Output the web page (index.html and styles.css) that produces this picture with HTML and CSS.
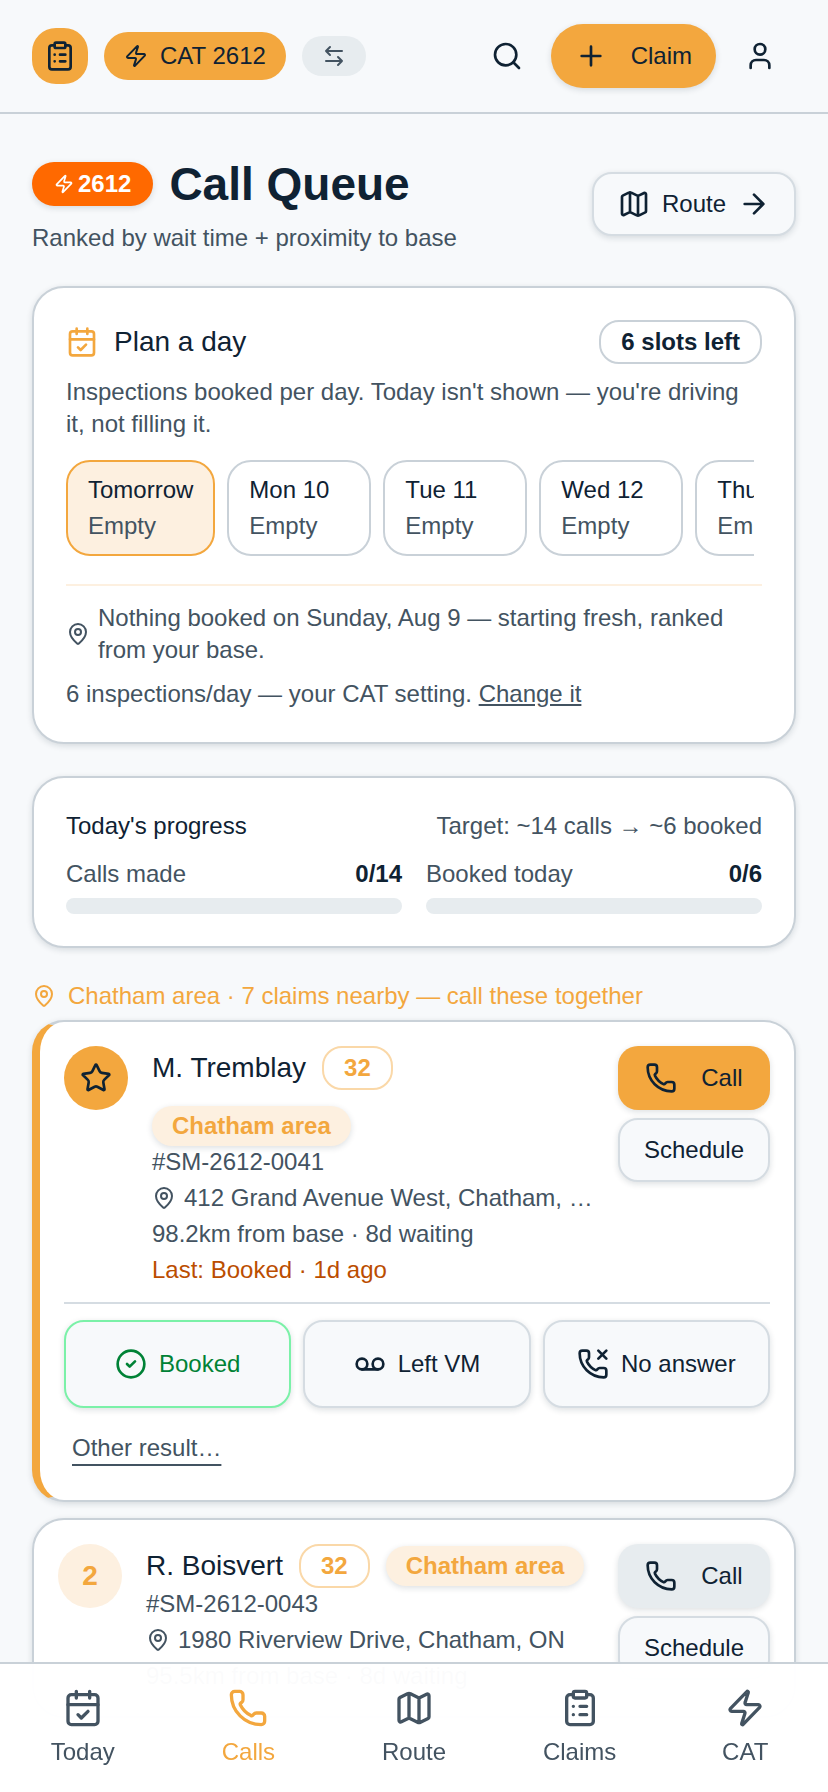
FILE: index.html
```html
<!DOCTYPE html>
<html lang="en">
<head>
    <meta charset="UTF-8">
    <meta name="viewport" content="width=device-width, initial-scale=1.0">
    <title>Call Queue</title>
    <link rel="stylesheet" href="styles.css">
</head>
<body>
    <svg class="sprite" aria-hidden="true">
        <symbol id="clipboard" viewBox="0 0 24 24"><rect x="8" y="2" width="8" height="4" rx="1"/><path d="M16 4h2a2 2 0 0 1 2 2v14a2 2 0 0 1-2 2H6a2 2 0 0 1-2-2V6a2 2 0 0 1 2-2h2M12 11h4M12 16h4M8 11h.01M8 16h.01"/></symbol>
        <symbol id="zap" viewBox="0 0 24 24"><path d="M4 14a1 1 0 0 1-.78-1.63l9.9-10.2a.5.5 0 0 1 .86.46l-1.92 6.02A1 1 0 0 0 13 10h7a1 1 0 0 1 .78 1.63l-9.9 10.2a.5.5 0 0 1-.86-.46l1.92-6.02A1 1 0 0 0 11 14z"/></symbol>
        <symbol id="swap" viewBox="0 0 24 24"><path d="M8 3 4 7l4 4M4 7h16M16 21l4-4-4-4M20 17H4"/></symbol>
        <symbol id="search" viewBox="0 0 24 24"><circle cx="11" cy="11" r="8"/><path d="m21 21-4.3-4.3"/></symbol>
        <symbol id="plus" viewBox="0 0 24 24"><path d="M5 12h14M12 5v14"/></symbol>
        <symbol id="user" viewBox="0 0 24 24"><path d="M19 21v-2a4 4 0 0 0-4-4H9a4 4 0 0 0-4 4v2"/><circle cx="12" cy="7" r="4"/></symbol>
        <symbol id="map" viewBox="0 0 24 24"><path d="M14.106 5.553a2 2 0 0 0 1.788 0l3.659-1.83A1 1 0 0 1 21 4.619v12.764a1 1 0 0 1-.553.894l-4.553 2.277a2 2 0 0 1-1.788 0l-4.212-2.106a2 2 0 0 0-1.788 0l-3.659 1.83A1 1 0 0 1 3 19.381V6.618a1 1 0 0 1 .553-.894l4.553-2.277a2 2 0 0 1 1.788 0zM15 5.764v15M9 3.236v15"/></symbol>
        <symbol id="arrow" viewBox="0 0 24 24"><path d="M5 12h14M12 5l7 7-7 7"/></symbol>
        <symbol id="calendar" viewBox="0 0 24 24"><path d="M8 2v4M16 2v4"/><rect x="3" y="4" width="18" height="18" rx="2"/><path d="M3 10h18M9 16l2 2 4-4"/></symbol>
        <symbol id="pin" viewBox="0 0 24 24"><path d="M20 10c0 4.993-5.539 10.193-7.399 11.799a1 1 0 0 1-1.202 0C9.539 20.193 4 14.993 4 10a8 8 0 0 1 16 0"/><circle cx="12" cy="10" r="3"/></symbol>
        <symbol id="star" viewBox="0 0 24 24"><path d="M11.525 2.295a.53.53 0 0 1 .95 0l2.31 4.679a2.123 2.123 0 0 0 1.595 1.16l5.166.756a.53.53 0 0 1 .294.904l-3.736 3.638a2.123 2.123 0 0 0-.611 1.878l.882 5.14a.53.53 0 0 1-.771.56l-4.618-2.428a2.122 2.122 0 0 0-1.973 0L6.396 21.01a.53.53 0 0 1-.77-.56l.881-5.139a2.122 2.122 0 0 0-.611-1.879L2.16 9.795a.53.53 0 0 1 .294-.906l5.165-.755a2.122 2.122 0 0 0 1.597-1.16z"/></symbol>
        <symbol id="phone" viewBox="0 0 24 24"><path d="M13.832 16.568a1 1 0 0 0 1.213-.303l.355-.465A2 2 0 0 1 17 15h3a2 2 0 0 1 2 2v3a2 2 0 0 1-2 2A18 18 0 0 1 2 4a2 2 0 0 1 2-2h3a2 2 0 0 1 2 2v3a2 2 0 0 1-.8 1.6l-.468.351a1 1 0 0 0-.292 1.233 14 14 0 0 0 6.392 6.384"/></symbol>
        <symbol id="phone-missed" viewBox="0 0 24 24"><path d="m16 2 6 6M22 2l-6 6"/><use href="#phone" width="24" height="24"/></symbol>
        <symbol id="check" viewBox="0 0 24 24"><circle cx="12" cy="12" r="10"/><path d="m9 12 2 2 4-4"/></symbol>
        <symbol id="voicemail" viewBox="0 0 24 24"><circle cx="6" cy="12" r="4"/><circle cx="18" cy="12" r="4"/><path d="M6 16h12"/></symbol>
    </svg>

    <header class="topbar">
        <a class="logo" href="#" aria-label="Home"><svg class="icon"><use href="#clipboard"/></svg></a>
        <button class="cat-pill"><svg class="icon icon-sm"><use href="#zap"/></svg>CAT 2612</button>
        <button class="swap-pill" aria-label="Switch"><svg class="icon icon-sm"><use href="#swap"/></svg></button>
        <div class="topbar-actions">
            <button class="icon-btn" aria-label="Search"><svg class="icon"><use href="#search"/></svg></button>
            <button class="claim-btn"><svg class="icon"><use href="#plus"/></svg>Claim</button>
            <button class="icon-btn" aria-label="Account"><svg class="icon"><use href="#user"/></svg></button>
        </div>
    </header>

    <main class="content">
        <div class="page-head">
            <div>
                <div class="page-title">
                    <span class="cat-tag"><svg class="icon icon-xs"><use href="#zap"/></svg>2612</span>
                    <h1>Call Queue</h1>
                </div>
                <p class="subtitle">Ranked by wait time + proximity to base</p>
            </div>
            <a class="btn route-btn" href="#"><svg class="icon"><use href="#map"/></svg>Route<svg class="icon"><use href="#arrow"/></svg></a>
        </div>

        <section class="card">
            <div class="plan-head">
                <svg class="icon amber"><use href="#calendar"/></svg>
                <h2>Plan a day</h2>
                <span class="badge">6 slots left</span>
            </div>
            <p class="plan-text">Inspections booked per day. Today isn't shown — you're driving it, not filling it.</p>
            <div class="days">
                <button class="day selected">Tomorrow<span>Empty</span></button>
                <button class="day">Mon 10<span>Empty</span></button>
                <button class="day">Tue 11<span>Empty</span></button>
                <button class="day">Wed 12<span>Empty</span></button>
                <button class="day">Thu 13<span>Empty</span></button>
            </div>
            <div class="plan-foot">
                <p class="with-icon"><svg class="icon icon-sm"><use href="#pin"/></svg><span>Nothing booked on Sunday, Aug 9 — starting fresh, ranked from your base.</span></p>
                <p>6 inspections/day — your CAT setting. <a href="#">Change it</a></p>
            </div>
        </section>

        <section class="card progress-card">
            <div class="split">
                <h3>Today's progress</h3>
                <span>Target: ~14 calls → ~6 booked</span>
            </div>
            <div class="meters">
                <div class="meter">
                    <div class="split"><label for="calls">Calls made</label><b>0/14</b></div>
                    <progress id="calls" value="0" max="14"></progress>
                </div>
                <div class="meter">
                    <div class="split"><label for="booked">Booked today</label><b>0/6</b></div>
                    <progress id="booked" value="0" max="6"></progress>
                </div>
            </div>
        </section>

        <section class="queue">
            <p class="area-label"><svg class="icon icon-sm"><use href="#pin"/></svg>Chatham area · 7 claims nearby — call these together</p>

            <article class="claim top">
                <div class="claim-main">
                    <div class="rank"><svg class="icon"><use href="#star"/></svg></div>
                    <div class="info">
                        <div class="info-head">
                            <h2>M. Tremblay</h2>
                            <span class="badge score">32</span>
                            <span class="area">Chatham area</span>
                        </div>
                        <div class="lines">
                            <p>#SM-2612-0041</p>
                            <p class="with-icon"><svg class="icon icon-sm"><use href="#pin"/></svg><span class="truncate">412 Grand Avenue West, Chatham, Ontario</span></p>
                            <p>98.2km from base · 8d waiting</p>
                            <p class="last">Last: Booked · 1d ago</p>
                        </div>
                    </div>
                    <div class="actions">
                        <button class="btn call primary"><svg class="icon"><use href="#phone"/></svg>Call</button>
                        <button class="btn">Schedule</button>
                    </div>
                </div>
                <div class="outcomes">
                    <button class="btn booked"><svg class="icon"><use href="#check"/></svg>Booked</button>
                    <button class="btn"><svg class="icon"><use href="#voicemail"/></svg>Left VM</button>
                    <button class="btn"><svg class="icon"><use href="#phone-missed"/></svg>No answer</button>
                </div>
                <button class="other">Other result…</button>
            </article>

            <article class="claim">
                <div class="claim-main">
                    <div class="rank">2</div>
                    <div class="info">
                        <div class="info-head">
                            <h2>R. Boisvert</h2>
                            <span class="badge score">32</span>
                            <span class="area">Chatham area</span>
                        </div>
                        <div class="lines">
                            <p>#SM-2612-0043</p>
                            <p class="with-icon"><svg class="icon icon-sm"><use href="#pin"/></svg><span class="truncate">1980 Riverview Drive, Chatham, ON</span></p>
                            <p>95.5km from base · 8d waiting</p>
                        </div>
                    </div>
                    <div class="actions">
                        <button class="btn call"><svg class="icon"><use href="#phone"/></svg>Call</button>
                        <button class="btn">Schedule</button>
                    </div>
                </div>
            </article>
        </section>
    </main>

    <nav class="tabbar">
        <a href="#"><svg class="icon icon-lg"><use href="#calendar"/></svg>Today</a>
        <a href="#" class="active" aria-current="page"><svg class="icon icon-lg"><use href="#phone"/></svg>Calls</a>
        <a href="#"><svg class="icon icon-lg"><use href="#map"/></svg>Route</a>
        <a href="#"><svg class="icon icon-lg"><use href="#clipboard"/></svg>Claims</a>
        <a href="#"><svg class="icon icon-lg"><use href="#zap"/></svg>CAT</a>
    </nav>
</body>
</html>
```
FILE: styles.css
```css
:root {
    --bg: #f7f9fb;
    --ink: #0f2233;
    --muted: #435361;
    --line: #c9d1d8;
    --line-soft: #d5dce2;
    --fill: #e7ecef;
    --amber: #f3a73e;
    --amber-soft: #fdf0e0;
    --shadow: 0 2px 6px rgba(15, 34, 51, 0.14);
}

* {
    box-sizing: border-box;
}

body {
    margin: 0;
    height: 100vh;
    overflow: hidden;
    display: flex;
    flex-direction: column;
    background: var(--bg);
    color: var(--muted);
    font-family: "Liberation Sans", Arial, sans-serif;
    font-size: 24px;
    line-height: 32px;
}

h1, h2, h3, p {
    margin: 0;
    font-weight: normal;
}

h1, h2, h3, b {
    color: var(--ink);
}

h2 {
    font-size: 28px;
    line-height: 40px;
}

h3 {
    font-size: 24px;
}

button {
    margin: 0;
    padding: 0;
    border: 0;
    background: none;
    color: var(--ink);
    font: inherit;
    cursor: pointer;
}

a {
    color: inherit;
}

/* icons */
.sprite {
    display: none;
}

.icon {
    flex: none;
    width: 32px;
    height: 32px;
    fill: none;
    stroke: currentColor;
    stroke-width: 2;
    stroke-linecap: round;
    stroke-linejoin: round;
}

.icon-xs {
    width: 20px;
    height: 20px;
}

.icon-sm {
    width: 24px;
    height: 24px;
}

.icon-lg {
    width: 40px;
    height: 40px;
}

.amber {
    color: var(--amber);
}

/* top bar */
.topbar {
    flex: none;
    display: flex;
    align-items: center;
    gap: 16px;
    padding: 24px 32px;
    border-bottom: 2px solid var(--line);
}

.logo, .cat-pill, .swap-pill, .icon-btn, .claim-btn {
    display: flex;
    align-items: center;
    justify-content: center;
    color: var(--ink);
}

.logo {
    width: 56px;
    height: 56px;
    border-radius: 24px;
    background: var(--amber);
}

.cat-pill {
    gap: 12px;
    height: 48px;
    padding: 0 20px;
    border-radius: 24px;
    background: var(--amber);
}

.swap-pill {
    height: 40px;
    padding: 0 20px;
    border-radius: 20px;
    background: var(--fill);
    color: var(--muted);
}

.topbar-actions {
    display: flex;
    gap: 8px;
    margin-left: auto;
}

.icon-btn {
    width: 72px;
    height: 64px;
}

.claim-btn {
    gap: 24px;
    height: 64px;
    padding: 0 24px;
    border-radius: 32px;
    background: var(--amber);
    box-shadow: var(--shadow);
}

/* page */
.content {
    flex: 1;
    min-height: 0;
    overflow-y: auto;
    scrollbar-width: none;
    padding: 40px 32px 160px;
}

.page-head {
    display: flex;
    align-items: center;
    justify-content: space-between;
    margin-bottom: 32px;
}

.page-title {
    display: flex;
    align-items: center;
    gap: 16px;
    margin-bottom: 8px;
}

h1 {
    font-size: 46px;
    font-weight: bold;
    line-height: 60px;
}

.cat-tag {
    display: flex;
    align-items: center;
    gap: 4px;
    height: 44px;
    padding: 0 22px;
    border-radius: 22px;
    background: #ff6900;
    color: #fff;
    font-weight: bold;
    box-shadow: var(--shadow);
}

.btn {
    display: flex;
    align-items: center;
    justify-content: center;
    gap: 12px;
    min-height: 64px;
    border: 2px solid var(--line-soft);
    border-radius: 20px;
    background: var(--bg);
    color: var(--ink);
    text-decoration: none;
    box-shadow: var(--shadow);
}

.route-btn {
    padding: 0 24px;
}

.card {
    margin-bottom: 32px;
    padding: 32px;
    border: 2px solid var(--line);
    border-radius: 32px;
    background: #fff;
    box-shadow: var(--shadow);
}

.badge {
    height: 44px;
    padding: 4px 20px;
    border: 2px solid var(--line);
    border-radius: 20px;
    color: var(--ink);
    font-weight: bold;
}

/* plan a day */
.plan-head {
    display: flex;
    align-items: center;
    gap: 16px;
}

.plan-head .badge {
    margin-left: auto;
}

.plan-text {
    margin: 12px 0 20px;
}

.days {
    display: flex;
    gap: 12px;
    margin-right: 8px;
    overflow: hidden;
}

.day {
    flex: none;
    min-width: 144px;
    padding: 10px 20px;
    border: 2px solid var(--line);
    border-radius: 24px;
    line-height: 36px;
    text-align: left;
}

.day span {
    display: block;
    color: var(--muted);
}

.day.selected {
    border-color: var(--amber);
    background: var(--amber-soft);
}

.plan-foot {
    display: grid;
    gap: 12px;
    margin-top: 28px;
    padding-top: 16px;
    border-top: 2px solid var(--amber-soft);
}

.with-icon {
    display: flex;
    align-items: center;
    gap: 8px;
}

/* progress */
.split {
    display: flex;
    justify-content: space-between;
}

.meters {
    display: grid;
    grid-template-columns: 1fr 1fr;
    gap: 24px;
    margin-top: 16px;
}

progress {
    appearance: none;
    display: block;
    width: 100%;
    height: 16px;
    margin-top: 8px;
    border: 0;
    border-radius: 8px;
    background: var(--fill);
    overflow: hidden;
}

progress::-webkit-progress-bar {
    background: var(--fill);
}

progress::-webkit-progress-value {
    background: var(--amber);
}

/* queue */
.area-label {
    display: flex;
    align-items: center;
    gap: 12px;
    margin-bottom: 8px;
    color: var(--amber);
}

.claim {
    margin-bottom: 16px;
    padding: 24px;
    border: 2px solid var(--line);
    border-radius: 32px;
    background: #fff;
    box-shadow: var(--shadow);
}

.claim.top {
    border-left: 8px solid var(--amber);
}

.claim-main {
    display: flex;
    align-items: flex-start;
    gap: 24px;
}

.rank {
    flex: none;
    display: flex;
    align-items: center;
    justify-content: center;
    width: 64px;
    height: 64px;
    border-radius: 50%;
    background: var(--amber-soft);
    color: var(--amber);
    font-size: 28px;
    font-weight: bold;
}

.top .rank {
    background: var(--amber);
    color: var(--ink);
}

.info {
    flex: 1;
    min-width: 0;
}

.info-head {
    display: flex;
    flex-wrap: wrap;
    align-items: center;
    gap: 16px;
}

.score {
    border-color: #fad8a8;
    color: var(--amber);
}

.area {
    height: 40px;
    padding: 4px 20px;
    border-radius: 20px;
    background: var(--amber-soft);
    color: var(--amber);
    font-weight: bold;
    box-shadow: var(--shadow);
}

.lines {
    display: grid;
    grid-template-columns: minmax(0, 1fr);
    gap: 4px;
}

.truncate {
    overflow: hidden;
    text-overflow: ellipsis;
    white-space: nowrap;
}

.last {
    color: #bb4d00;
}

.actions {
    display: grid;
    gap: 8px;
}

.actions .btn {
    padding: 0 24px;
}

.actions .call {
    gap: 24px;
    border: 0;
    background: var(--fill);
}

.actions .primary {
    background: var(--amber);
}

.outcomes {
    display: grid;
    grid-template-columns: repeat(3, 1fr);
    gap: 12px;
    margin-top: 16px;
    padding-top: 16px;
    border-top: 2px solid var(--line-soft);
}

.outcomes .btn {
    height: 88px;
}

.outcomes .booked {
    border-color: #7bf1a8;
    color: #008236;
}

.other {
    display: block;
    height: 56px;
    margin-top: 12px;
    padding: 0 8px;
    color: var(--muted);
    text-decoration: underline 2px;
    text-underline-offset: 8px;
}

/* bottom tabs, slightly see-through over the queue */
.tabbar {
    position: fixed;
    left: 0;
    right: 0;
    bottom: 0;
    display: grid;
    grid-template-columns: repeat(5, 1fr);
    padding: 24px 0;
    border-top: 2px solid var(--line);
    background: rgba(255, 255, 255, 0.98);
}

.tabbar a {
    display: flex;
    flex-direction: column;
    align-items: center;
    gap: 8px;
    text-decoration: none;
}

.tabbar .active {
    color: var(--amber);
}
```
